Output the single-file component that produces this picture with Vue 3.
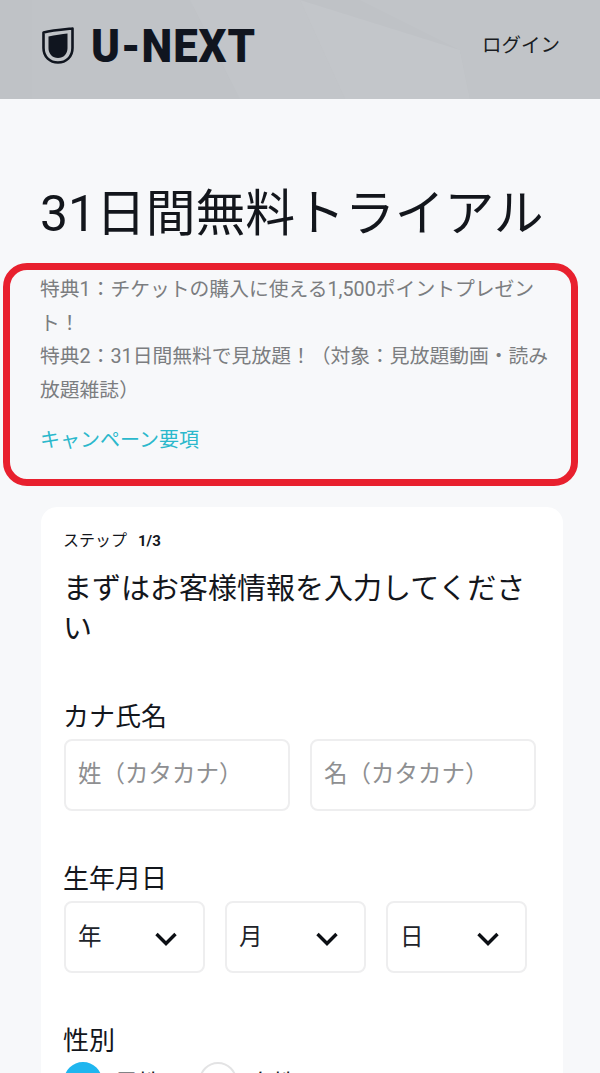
<script setup>
const nameFields = ['姓（カタカナ）', '名（カタカナ）']
const dateFields = ['年', '月', '日']
const genders = [
  { label: '男性', checked: true },
  { label: '女性', checked: false }
]
</script>

<template>
  <div class="page">
    <header class="top">
      <svg class="bg" viewBox="0 0 600 99" preserveAspectRatio="none" aria-hidden="true">
        <polygon points="32,0 190,0 240,99 32,99" fill="#c0c3c7" />
        <polygon points="190,0 300,0 345,99 240,99" fill="#c2c5c9" />
        <polygon points="300,0 460,50 470,99 345,99" fill="#c3c6ca" />
        <polygon points="360,0 600,0 600,99 470,99 460,50" fill="#c1c4c8" />
      </svg>
      <div class="brand">
        <svg class="shield" viewBox="0 0 32 37" aria-hidden="true">
          <path d="M1.5 5.5 C10 3.5 21 2.5 30.5 1.5 L30.5 21 C30.5 30 24 35.5 16 35.5 C8 35.5 1.5 30 1.5 21 Z" fill="none" stroke="#10151f" stroke-width="2.6" stroke-linejoin="round" />
          <path d="M6.5 9.5 C13 8 20 7 25.5 6.5 L25.5 21 C25.5 27 21.5 31 16 31 C10.5 31 6.5 27 6.5 21 Z" fill="#10151f" />
        </svg>
        <span class="wordmark">U-NEXT</span>
      </div>
      <span class="login">ログイン</span>
    </header>

    <h1 class="title">31日間無料トライアル</h1>

    <section class="perks">
      <p class="perk">特典1：チケットの購入に使える1,500ポイントプレゼント！</p>
      <p class="perk">特典2：31日間無料で見放題！（対象：見放題動画・読み放題雑誌）</p>
      <a class="link">キャンペーン要項</a>
    </section>

    <main class="card">
      <div class="step">ステップ<b>1/3</b></div>
      <h2 class="heading">まずはお客様情報を入力してください</h2>

      <div class="label first">カナ氏名</div>
      <div class="names">
        <div v-for="f in nameFields" :key="f" class="box name">{{ f }}</div>
      </div>

      <div class="label">生年月日</div>
      <div class="dates">
        <div v-for="f in dateFields" :key="f" class="box date">
          <span>{{ f }}</span>
          <svg class="chev" viewBox="0 0 24 16" aria-hidden="true">
            <path d="M2.5 3 L12 12.5 L21.5 3" fill="none" stroke="#0c0f14" stroke-width="3.4" />
          </svg>
        </div>
      </div>

      <div class="label">性別</div>
      <div class="genders">
        <div v-for="g in genders" :key="g.label" class="gender">
          <span class="radio" :class="{ on: g.checked }"></span>
          <span>{{ g.label }}</span>
        </div>
      </div>
    </main>
  </div>
</template>

<style>
html, body { margin: 0; height: 1073px; overflow: hidden; background: #f7f8fa; }
</style>

<style scoped>
.page {
  width: 600px;
  height: 1073px;
  overflow: hidden;
  background: #f7f8fa;
  color: #13161c;
  font-family: Roboto, "Noto Sans CJK JP", sans-serif;
}
.top {
  position: relative;
  height: 99px;
  box-sizing: border-box;
  padding: 0 40px 0 42px;
  display: flex;
  align-items: center;
  justify-content: space-between;
  background: #bfc2c6;
}
.bg { position: absolute; inset: 0; width: 100%; height: 100%; }
.brand { position: relative; display: flex; align-items: center; gap: 17px; margin-top: -8px; }
.shield { width: 32px; height: 37px; }
.wordmark {
  font-size: 47px;
  line-height: 47px;
  font-weight: 900;
  letter-spacing: 1px;
  color: #10151f;
  transform: scaleX(0.93);
  transform-origin: left center;
}
.login { position: relative; font-size: 19.5px; line-height: 24px; margin-top: -7px; color: #191c22; }
.title {
  margin: 85px 0 19px 40px;
  font-size: 49.8px;
  line-height: 60px;
  font-weight: 400;
  white-space: nowrap;
}
.perks {
  box-sizing: border-box;
  width: 575px;
  height: 223px;
  margin-left: 3px;
  padding: 3px 11px 0 30px;
  border: 7px solid #e8202e;
  border-radius: 24px;
}
.perk { margin: 0; font-size: 19.8px; line-height: 33.5px; color: #7b7d80; }
.link { display: block; margin-top: 17px; font-size: 20px; line-height: 33px; color: #2bb8cc; }
.card {
  box-sizing: border-box;
  width: 522px;
  height: 640px;
  margin: 21px 0 0 41px;
  padding: 23px 23px 0;
  background: #fff;
  border-radius: 16px;
}
.step { margin-left: -1px; font-size: 16px; line-height: 22px; }
.step b { margin-left: 11px; font-size: 15px; font-weight: 700; }
.heading { margin: 17px 0 0 -1px; font-size: 29px; line-height: 40px; font-weight: 400; }
.label { margin: 51px 0 0 -1px; font-size: 26px; line-height: 34px; }
.names { display: flex; gap: 20px; margin-top: 5px; }
.box {
  box-sizing: border-box;
  height: 72px;
  border: 2px solid #eeeeef;
  border-radius: 8px;
  background: #fff;
  font-size: 23.5px;
}
.name { width: 226px; padding: 17px 0 0 12px; line-height: 33px; color: #8e8f91; }
.dates { display: flex; gap: 20px; margin-top: 5px; }
.date {
  width: 141px;
  padding: 0 25px 0 12px;
  display: flex;
  align-items: center;
  justify-content: space-between;
  line-height: 33px;
  color: #20232a;
}
.chev { width: 24px; height: 16px; margin-top: 4px; }
.genders { display: flex; gap: 38px; margin-top: 4px; font-size: 23px; }
.gender { display: flex; align-items: center; gap: 13px; }
.radio {
  box-sizing: border-box;
  width: 38px;
  height: 38px;
  border: 2px solid #e3e3e4;
  border-radius: 50%;
  background: #fff;
}
.radio.on { border-color: #1fb6ef; background: #1fb6ef; }
</style>
